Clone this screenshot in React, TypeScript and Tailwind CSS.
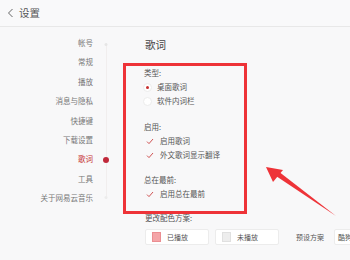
import React from 'react';

const font = { fontFamily: '"Noto Sans CJK SC", "Noto Sans", sans-serif' };

const navItems = ['帐号', '常规', '播放', '消息与隐私', '快捷键', '下载设置', '歌词', '工具', '关于网易云音乐'];

const Check = () => (
  <svg width="8" height="7" viewBox="0 0 8 7" className="shrink-0">
    <path d="M1 3.6 L3 5.6 L7 1" fill="none" stroke="#c9403f" strokeWidth="0.9" />
  </svg>
);

const Radio = ({ on }: { on?: boolean }) => (
  <span className="w-[9px] h-[9px] rounded-full border border-[#ececec] bg-white flex items-center justify-center shrink-0">
    {on && <span className="w-[3px] h-[3px] rounded-full bg-[#c62f2f]" />}
  </span>
);

export default function App() {
  return (
    <div className="w-[350px] h-[260px] relative overflow-hidden bg-[#f8f8f9] text-[#555]" style={font}>
      {/* header */}
      <div className="h-[27px] flex items-center pl-[7px] gap-[5px] border-b border-[#e8e8e8] bg-[#f9f9fa]">
        <svg width="7" height="10" viewBox="0 0 7 10">
          <path d="M5.5 1 L1.5 5 L5.5 9" fill="none" stroke="#666" strokeWidth="1" />
        </svg>
        <span className="text-[10.5px] text-[#555]">设置</span>
      </div>

      <div className="flex">
        {/* sidebar */}
        <div className="w-[93px] shrink-0 pt-[6px] flex flex-col items-end text-[7.5px] text-[#777]">
          {navItems.map((t) => (
            <div key={t} className={`h-[19.4px] leading-[19.4px] ${t === '歌词' ? 'text-[#c62f2f]' : ''}`}>
              {t}
            </div>
          ))}
        </div>

        {/* track line */}
        <div className="w-[26px] shrink-0 flex justify-center pt-[16px]">
          <div className="relative w-px h-[156px] bg-[#f1eeee]">
            <span className="absolute left-1/2 -translate-x-1/2 top-[0px] w-[3px] h-[3px] rounded-full bg-[#e6e6e6]" />
            <span className="absolute left-1/2 -translate-x-1/2 top-[114px] w-[6px] h-[6px] rounded-full bg-[#c0283a]" />
            <span className="absolute left-1/2 -translate-x-1/2 top-[153px] w-[3px] h-[3px] rounded-full bg-[#ececec]" />
          </div>
        </div>

        {/* content */}
        <div className="flex-1 min-w-0 pl-[4px]">
          <div className="h-[36px] flex items-center pl-[22px] text-[10.5px] text-[#444]">歌词</div>
          <div className="w-[124px] h-[151px] border-[3px] border-[#ee3338] pl-[18px] pb-[11px] text-[7.5px]">
            <div className="h-[14px] flex items-center">类型:</div>
            <div className="h-[14px] flex items-center gap-[5px] -ml-[1px]"><Radio on />桌面歌词</div>
            <div className="h-[14px] flex items-center gap-[5px] -ml-[1px]"><Radio />软件内词栏</div>
            <div className="h-[12px]" />
            <div className="h-[14px] flex items-center">启用:</div>
            <div className="h-[14px] flex items-center gap-[6px] pl-[2px]"><Check />启用歌词</div>
            <div className="h-[14px] flex items-center gap-[6px] pl-[2px]"><Check />外文歌词显示翻译</div>
            <div className="h-[11px]" />
            <div className="h-[14px] flex items-center">总在最前:</div>
            <div className="h-[14px] flex items-center gap-[6px] pl-[2px]"><Check />启用总在最前</div>
          </div>
          <div className="h-[12px] mt-[-2px] flex items-center pl-[22px] text-[7.5px] text-[#555]">更改配色方案:</div>
          <div className="flex items-center pl-[22px] mt-[5px] gap-[6px] text-[7px]">
            <div className="w-[64px] h-[16px] shrink-0 bg-white border border-[#ececec] rounded-[2px] flex items-center pl-[6px] gap-[6px]">
              <span className="w-[9px] h-[10px] bg-[#f4a5a8] border border-[#eb8e92]" />
              已播放
            </div>
            <div className="w-[64px] h-[16px] shrink-0 bg-white border border-[#ececec] rounded-[2px] flex items-center pl-[6px] gap-[6px]">
              <span className="w-[9px] h-[10px] bg-[#ededed] border border-[#e0e0e0]" />
              未播放
            </div>
            <div className="ml-[11px] whitespace-nowrap shrink-0">预设方案</div>
            <div className="ml-[4px] w-[40px] h-[16px] bg-white border border-[#ececec] rounded-[2px] flex items-center pl-[3px] shrink-0">酷狗</div>
          </div>
        </div>
      </div>

      {/* annotation arrow */}
      <svg className="absolute left-0 top-0 pointer-events-none" width="350" height="260">
        <path d="M336 216 L276 176 L278 171 Z" fill="#ee3338" />
        <path d="M266 167 L283 170 L273 182 Z" fill="#ee3338" />
      </svg>
    </div>
  );
}
